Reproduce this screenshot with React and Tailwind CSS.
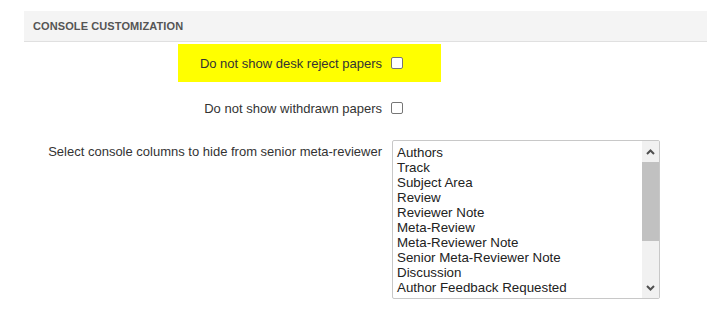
import React from "react";

const items = [
  "Authors",
  "Track",
  "Subject Area",
  "Review",
  "Reviewer Note",
  "Meta-Review",
  "Meta-Reviewer Note",
  "Senior Meta-Reviewer Note",
  "Discussion",
  "Author Feedback Requested",
  "Author Feedback Submitted",
  "Conflicts",
];

function Box() {
  return (
    <span className="inline-block w-[12px] h-[12px] border border-[#767676] rounded-[2px] bg-white shrink-0" />
  );
}

export default function App() {
  return (
    <div
      className="w-[707px] h-[313px] bg-white text-[#333] overflow-hidden"
      style={{ fontFamily: '"Liberation Sans", Arial, sans-serif' }}
    >
      <div className="pl-[24px] pt-[11px]">
        <div className="h-[31px] bg-[#f4f4f4] border-b border-[#e0e0e0] flex items-center pl-[9px]">
          <span className="text-[11px] font-bold text-[#555] tracking-[0.1px]">
            CONSOLE CUSTOMIZATION
          </span>
        </div>
      </div>

      <div className="pl-[178px] pt-[2px]">
        <div className="w-[263px] h-[38px] bg-[#ffff00] flex items-center">
          <span className="w-[204px] text-right text-[13px] leading-[15px] mt-[1px]">
            Do not show desk reject papers
          </span>
          <span className="ml-[9px] flex">
            <Box />
          </span>
        </div>
      </div>

      <div className="flex items-center mt-[19px] h-[14px]">
        <span className="w-[382px] text-right text-[13px] leading-[15px]">
          Do not show withdrawn papers
        </span>
        <span className="ml-[9px] flex">
          <Box />
        </span>
      </div>

      <div className="flex items-start mt-[25px]">
        <span className="w-[382px] text-right text-[13px] leading-[15px] pt-[4px]">
          Select console columns to hide from senior meta-reviewer
        </span>
        <div className="ml-[10px] w-[268px] h-[159px] border border-[#c8c8c8] rounded-[2px] flex overflow-hidden">
          <div className="flex-1 pl-[4px] pt-[4px] overflow-hidden">
            {items.map((t) => (
              <div key={t} className="text-[13.33px] leading-[15px] text-[#222] whitespace-nowrap">
                {t}
              </div>
            ))}
          </div>
          <div className="w-[17px] bg-[#f1f1f1] flex flex-col">
            <div className="h-[21px] flex items-center justify-center">
              <svg width="9" height="6" viewBox="0 0 9 6">
                <path d="M1 5 L4.5 1.5 L8 5" fill="none" stroke="#505050" strokeWidth="2" />
              </svg>
            </div>
            <div className="h-[79px] bg-[#c1c1c1]" />
            <div className="flex-1" />
            <div className="h-[21px] flex items-center justify-center">
              <svg width="9" height="6" viewBox="0 0 9 6">
                <path d="M1 1 L4.5 4.5 L8 1" fill="none" stroke="#505050" strokeWidth="2" />
              </svg>
            </div>
          </div>
        </div>
      </div>
    </div>
  );
}
